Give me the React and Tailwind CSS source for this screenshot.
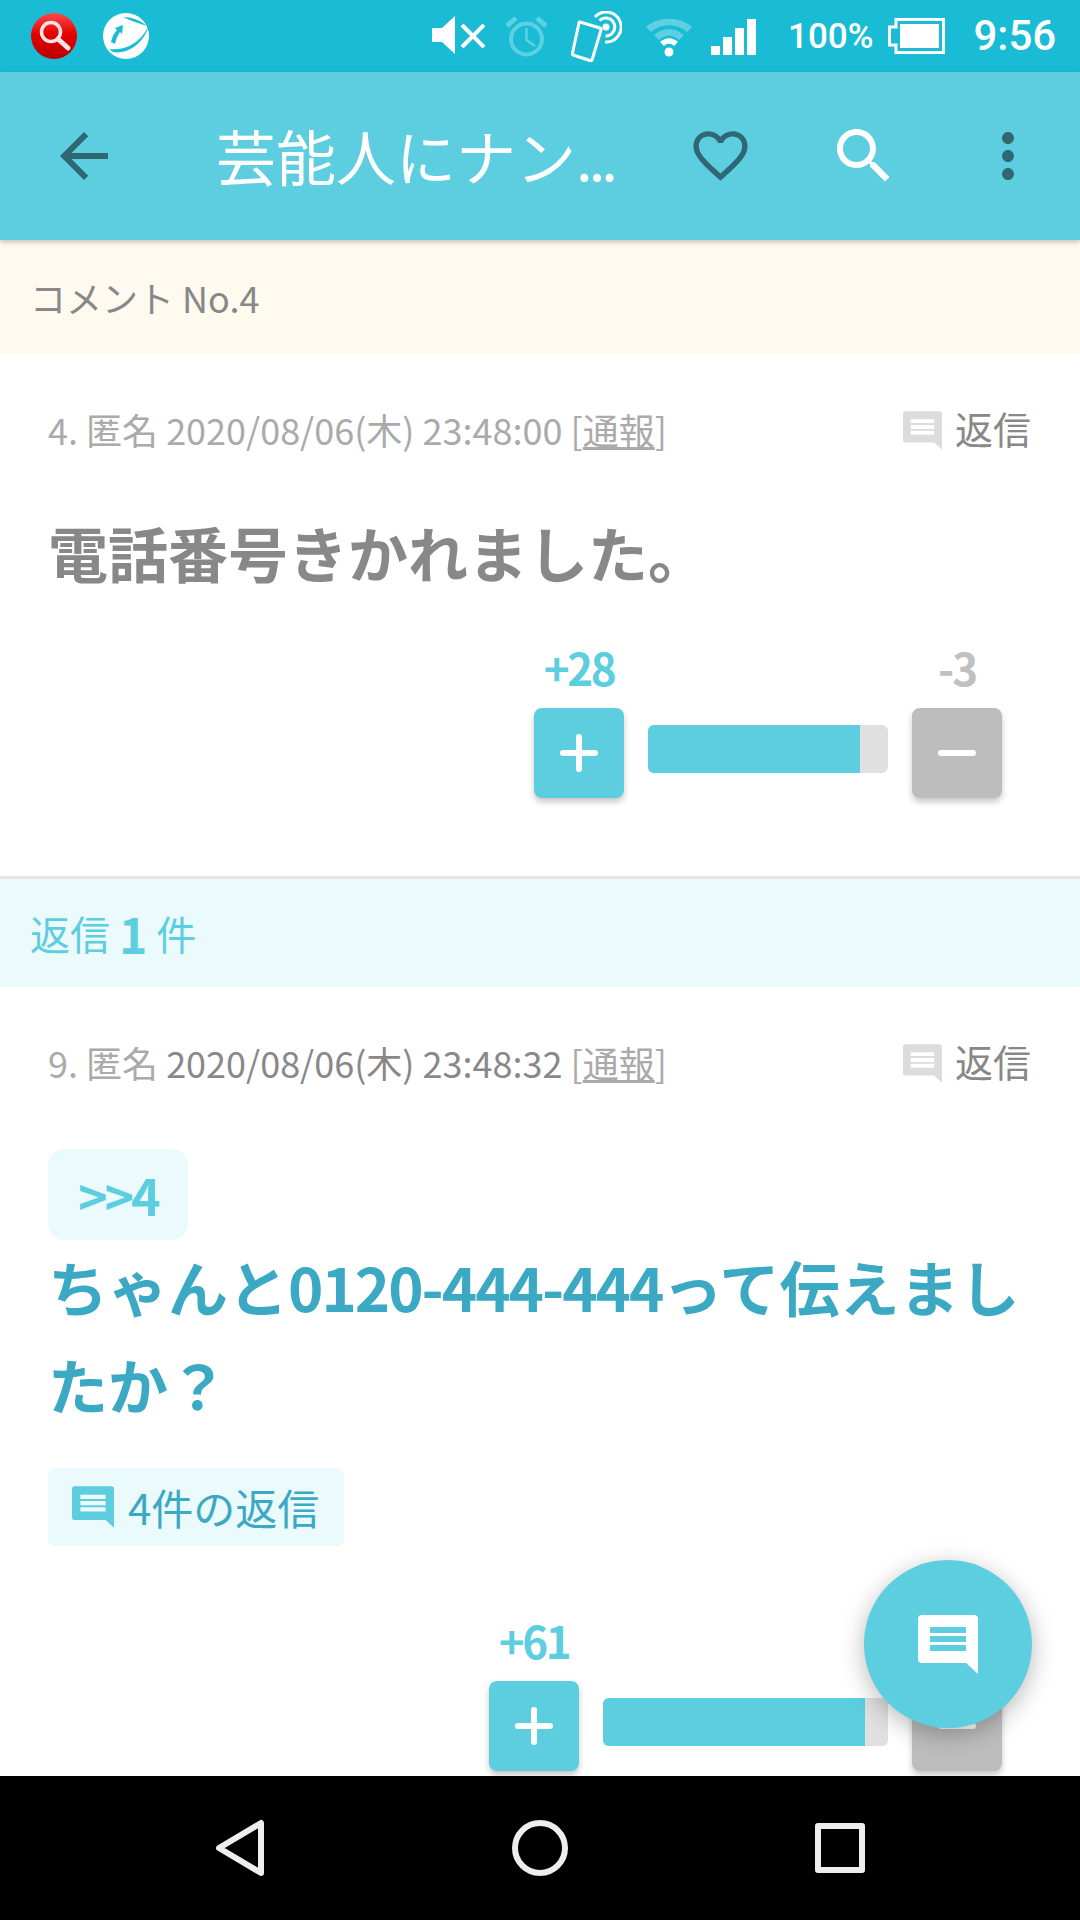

const BubbleIcon = ({ className }) => (
  <svg viewBox="0 0 60 59" className={className} fill="currentColor">
    <path fillRule="evenodd" d="M4 0H56A4 4 0 0 1 60 4V59L48 48H4A4 4 0 0 1 0 44V4A4 4 0 0 1 4 0ZM12 12V18H48V12ZM12 21V27H48V21ZM12 30V36H48V30Z" />
  </svg>
);

const Plus = () => (
  <svg width="38" height="38" viewBox="0 0 38 38" fill="none" stroke="white" strokeWidth="6" strokeLinecap="round"><path d="M3 19H35M19 3V35" /></svg>
);
const Minus = () => (
  <svg width="38" height="38" viewBox="0 0 38 38" fill="none" stroke="white" strokeWidth="6" strokeLinecap="round"><path d="M3 19H35" /></svg>
);

function MetaRow({ dark, n }) {
  return (
    <div className="flex items-center justify-between h-[50px] pl-[48px] pr-[49px]">
      <div className="text-[36px] leading-[50px] text-[#aaaaaa] mt-[-3px]">
        {n}. 匿名 <span className={dark ? "text-[#888888]" : ""}>{dark ? "2020/08/06(木) 23:48:32" : "2020/08/06(木) 23:48:00"}</span> [<span className="underline">通報</span>]
      </div>
      <div className="flex items-center text-[#888888] text-[38px] leading-[50px]">
        <BubbleIcon className="w-[39px] h-[39px] text-[#dcdcdc] mr-[13px]" />
        <span className="mt-[-5px]">返信</span>
      </div>
    </div>
  );
}

function VoteRow({ plus, minus, barW, fill, mt }) {
  return (
    <div className={`flex justify-end pr-[78px] ${mt}`}>
      <div className="flex flex-col items-center w-[90px]">
        <div className="h-[40px] leading-[38px] text-[44px] font-bold text-[#5dcedf] tracking-[-2.5px] whitespace-nowrap">{plus}</div>
        <div className="w-[90px] h-[90px] mt-[20px] rounded-[8px] bg-[#5dcedf] flex items-center justify-center shadow-[0_4px_6px_rgba(0,0,0,0.22)]"><Plus /></div>
      </div>
      <div className="ml-[24px] mr-[24px] mt-[77px] h-[48px] rounded-[6px] bg-[#e0e0e0] overflow-hidden" style={{ width: barW }}>
        <div className="h-full bg-[#5dcedf]" style={{ width: fill }} />
      </div>
      <div className="flex flex-col items-center w-[90px]">
        <div className="h-[40px] leading-[38px] text-[44px] font-bold text-[#c0c0c0] tracking-[-2px]">{minus}</div>
        <div className="w-[90px] h-[90px] mt-[20px] rounded-[8px] bg-[#bdbdbd] flex items-center justify-center shadow-[0_4px_6px_rgba(0,0,0,0.22)]"><Minus /></div>
      </div>
    </div>
  );
}

function StatusBar() {
  return (
    <div className="h-[72px] bg-[#19bcd4] flex items-center text-white shrink-0">
      <svg width="46" height="46" viewBox="0 0 46 46" className="ml-[31px]">
        <defs>
          <linearGradient id="rg" x1="0" y1="0" x2="0" y2="1">
            <stop offset="0" stopColor="#ff4a4a" />
            <stop offset="0.45" stopColor="#e60000" />
            <stop offset="1" stopColor="#b80000" />
          </linearGradient>
        </defs>
        <circle cx="23" cy="23" r="23" fill="url(#rg)" />
        <circle cx="20" cy="19" r="9.5" fill="none" stroke="#ffe5e5" strokeWidth="3.5" />
        <path d="M27 26L37 35" stroke="#ffe5e5" strokeWidth="5" strokeLinecap="round" />
      </svg>
      <svg width="46" height="46" viewBox="0 0 46 46" className="ml-[26px]">
        <circle cx="23" cy="23" r="23" fill="white" />
        <path d="M20 4C28 4 37 7 44 13C36 10 28 8 20 4Z" fill="#19bcd4" />
        <path d="M6 36C20 38 36 32 45 14C42 28 26 42 10 39Z" fill="#19bcd4" />
        <path d="M8 29C9 24 11 20 14 17L12 15L20 12L19 21L17 19C15 22 13 26 12 31Z" fill="#19bcd4" />
      </svg>
      <svg width="53" height="40" viewBox="0 0 53 40" className="ml-[283px]" fill="white">
        <path d="M0 12H10L23 0V38L10 26H0Z" />
        <path d="M30 9L52 31M52 9L30 31" stroke="white" strokeWidth="4" fill="none" />
      </svg>
      <svg width="41" height="42" viewBox="0 0 41 42" className="ml-[21px] opacity-30" fill="none" stroke="white" strokeWidth="4">
        <circle cx="20.5" cy="24" r="15.5" />
        <path d="M20.5 13V25L29 31" strokeWidth="2.500" />
        <path d="M1 11L10 3M40 11L31 3" strokeWidth="5" />
      </svg>
      <svg width="51" height="51" viewBox="0 0 51 51" className="ml-[24px]" fill="none" stroke="white" strokeWidth="3">
        <path d="M9 11L29 17Q30.500 17.500 30 19L21 49Q20.500 50 19 49.500L2 44Q1 43.500 1.500 42L8 12Q8 10.800 9 11Z" strokeLinejoin="round" />
        <path d="M24 6A15 15 0 1 1 34 31" />
        <path d="M28.500 9.500A9 9 0 1 1 34.500 25" />
        <circle cx="35" cy="16" r="3.500" fill="white" stroke="none" />
      </svg>
      <svg width="50" height="42" viewBox="0 0 50 42" className="ml-[22px]">
        <path d="M2 12C14 1 36 1 48 12L43 17C33 8 17 8 7 17Z" fill="white" opacity="0.3" />
        <path d="M10 20C19 12 31 12 40 20L35 25C28 19 22 19 15 25Z" fill="white" opacity="0.3" />
        <path d="M16 27C22 22 28 22 34 27L30 31C27 28 23 28 20 31Z" fill="white" />
        <circle cx="25" cy="37" r="4.500" fill="white" />
      </svg>
      <svg width="45" height="36" viewBox="0 0 45 36" className="ml-[17px] mt-[1px]" fill="white">
        <rect x="0" y="27" width="9" height="9" />
        <rect x="12" y="18" width="9" height="18" />
        <rect x="24" y="9" width="9" height="27" />
        <rect x="36" y="0" width="9" height="36" />
      </svg>
      <span className="ml-[32px] font-['Roboto'] font-medium text-[35px] leading-none">100%</span>
      <svg width="57" height="36" viewBox="0 0 57 36" className="ml-[15px]">
        <path d="M8 1.500H55.500V34.500H8V27H1.500V9H8Z" fill="none" stroke="white" strokeWidth="3" />
        <rect x="12" y="6" width="39" height="24" fill="white" />
      </svg>
      <span className="ml-[28px] font-['Roboto'] font-medium text-[42px] leading-none">9:56</span>
    </div>
  );
}

function AppBar() {
  return (
    <div className="h-[168px] bg-[#5dcedf] flex items-center shrink-0 shadow-[0_2px_5px_rgba(70,50,20,0.3)] z-10 relative">
      <svg width="72" height="72" viewBox="0 0 24 24" fill="#2f6874" className="ml-[48px]"><path d="M20 11H7.83l5.59-5.59L12 4l-8 8 8 8 1.41-1.41L7.83 13H20v-2z" /></svg>
      <div className="ml-[96px] w-[402px] text-white text-[60px] leading-[80px] whitespace-nowrap mt-[-2px]">芸能人にナン<span className="tracking-[-4px]">...</span></div>
      <svg width="65" height="65" viewBox="0 0 24 24" fill="#2f6874" className="ml-[70px] mt-[-2px]"><path d="M16.5 3c-1.74 0-3.41.81-4.5 2.09C10.91 3.81 9.24 3 7.5 3 4.42 3 2 5.42 2 8.5c0 3.78 3.4 6.86 8.55 11.54L12 21.35l1.45-1.32C18.6 15.36 22 12.28 22 8.5 22 5.42 19.58 3 16.5 3zm-4.4 15.55l-.1.1-.1-.1C7.14 14.24 4 11.39 4 8.5 4 6.5 5.5 5 7.5 5c1.54 0 3.04.99 3.57 2.36h1.87C13.46 5.99 14.96 5 16.5 5c2 0 3.5 1.5 3.5 3.5 0 2.89-3.14 5.74-7.9 10.05z" /></svg>
      <svg width="72" height="72" viewBox="0 0 24 24" fill="white" className="ml-[75px]"><path d="M15.5 14h-.79l-.28-.27C15.41 12.59 16 11.11 16 9.5 16 5.91 13.09 3 9.5 3S3 5.91 3 9.5 5.91 16 9.5 16c1.61 0 3.09-.59 4.23-1.57l.27.28v.79l5 4.99L20.49 19l-4.99-5zm-6 0C7.01 14 5 11.99 5 9.5S7.01 5 9.5 5 14 7.01 14 9.5 11.99 14 9.5 14z" /></svg>
      <svg width="72" height="72" viewBox="0 0 24 24" fill="#2f6874" className="ml-[72px]"><path d="M12 8c1.1 0 2-.9 2-2s-.9-2-2-2-2 .9-2 2 .9 2 2 2zm0 2c-1.1 0-2 .9-2 2s.9 2 2 2 2-.9 2-2-.9-2-2-2zm0 6c-1.1 0-2 .9-2 2s.9 2 2 2 2-.9 2-2-.9-2-2-2z" /></svg>
    </div>
  );
}

export default function App() {
  return (
    <div lang="ja" className="relative w-[1080px] h-[1920px] overflow-hidden bg-white flex flex-col font-['Noto_Sans_CJK_JP',sans-serif]">
      <StatusBar />
      <AppBar />
      <div className="flex-1 overflow-hidden">
        <div className="h-[114px] bg-[#fffaf0] pl-[30px] flex items-center text-[36px] text-[#888888]">コメント No.4</div>

        <div className="pt-[51px] pb-[78px] border-b-[3px] border-[#e6e6e6] h-[525px]">
          <MetaRow n="4" />
          <div className="mt-[48px] pl-[48px] text-[60px] leading-[98px] font-bold text-[#888888]">電話番号きかれました。</div>
          <VoteRow plus="+28" minus="-3" barW={240} fill={212} mt="mt-[47px]" />
        </div>

        <div className="h-[108px] bg-[#ebfafc] pl-[30px] flex items-center text-[40px] text-[#5dcedf]">返信&nbsp;<b className="text-[48px] leading-none">1</b>&nbsp;件</div>

        <div className="pt-[51px]">
          <MetaRow n="9" dark />
          <div className="mt-[61px] ml-[48px] w-[140px] h-[91px] rounded-[16px] bg-[#ebfafc] flex items-center justify-center text-[50px] font-bold text-[#5dcedf] tracking-[-3px]">&gt;&gt;4</div>
          <div className="mt-[-3px] px-[48px] text-[60px] leading-[98px] font-bold text-[#3ba9c3]">ちゃんと<span className="tracking-[-2px]">0120-444-444</span>って伝えましたか？</div>
          <div className="mt-[35px] ml-[48px] w-[296px] h-[78px] rounded-[6px] bg-[#ebfafc] flex items-center pl-[24px] text-[42px] text-[#3ba9c3]">
            <BubbleIcon className="w-[42px] h-[42px] text-[#5dcedf] mr-[16px] shrink-0" />
            <span className="whitespace-nowrap mt-[-1px] ml-[-2px]">4件の返信</span>
          </div>
          <VoteRow plus="+61" minus="" barW={285} fill={262} mt="mt-[75px]" />
        </div>
      </div>

      <div className="h-[144px] bg-black flex items-center shrink-0 z-10">
        <svg width="54" height="60" viewBox="0 0 54 60" className="ml-[213px]" fill="none" stroke="#eeeeee" strokeWidth="6" strokeLinejoin="round"><path d="M6 30L48 5V55Z" /></svg>
        <div className="ml-[245px] w-[56px] h-[56px] rounded-full border-[6px] border-[#eeeeee]" />
        <div className="ml-[247px] w-[50px] h-[50px] rounded-[3px] border-[6px] border-[#eeeeee]" />
      </div>

      <div className="absolute left-[864px] top-[1560px] w-[168px] h-[168px] rounded-full bg-[#5dcedf] flex items-center justify-center shadow-[0_6px_24px_rgba(0,0,0,0.28)] text-white">
        <BubbleIcon className="w-[60px] h-[59px] mt-[1px]" />
      </div>
    </div>
  );
}
